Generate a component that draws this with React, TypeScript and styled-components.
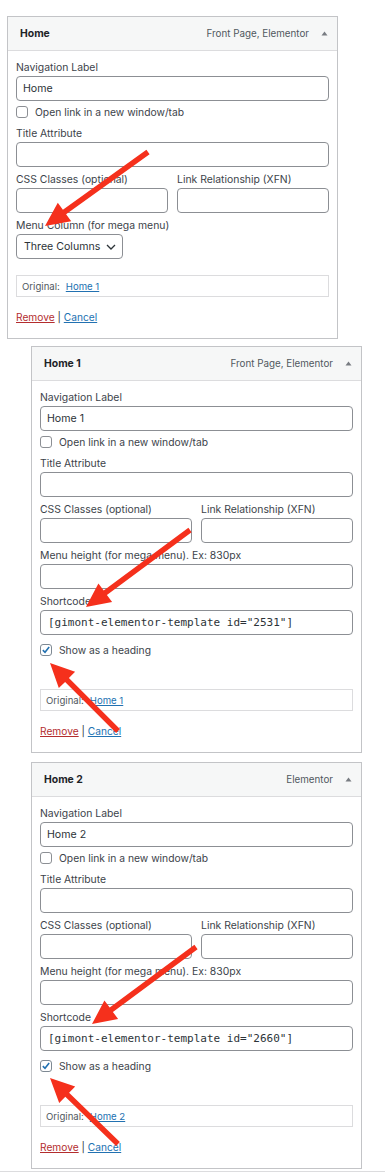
import styled, { createGlobalStyle } from "styled-components";

const GlobalStyle = createGlobalStyle`
  html, body {
    margin: 0;
    padding: 0;
    background: #fff;
  }
  body {
    font-family: Inter, "Liberation Sans", Arial, sans-serif;
    color: #3c434a;
  }
  * {
    box-sizing: border-box;
  }
`;

const Page = styled.div`
  position: relative;
  width: 385px;
  height: 1173px;
  padding-top: 16px;
  overflow: hidden;
`;

const Panel = styled.section<{ $indent: number; $gap: number }>`
  width: 331px;
  margin: ${(p) => p.$gap}px 0 0 ${(p) => p.$indent}px;
  border: 1px solid #c3c4c7;
  background: #fff;
`;

const Header = styled.div`
  display: flex;
  align-items: center;
  height: 34px;
  padding: 0 3px 0 12px;
  background: #f6f7f7;
  border-bottom: 1px solid #dcdcde;
`;

const Title = styled.div`
  flex: 1;
  font-size: 10.4px;
  font-weight: 700;
  color: #1d2327;
`;

const Meta = styled.span`
  margin-right: 5px;
  font-size: 9.8px;
  color: #50575e;
`;

const Toggle = styled.span`
  display: flex;
  align-items: center;
  justify-content: center;
  width: 20px;
  height: 20px;
`;

const Body = styled.div`
  padding: 8px 8px 13px;
`;

const Field = styled.div<{ $top?: number }>`
  margin-top: ${(p) => p.$top ?? 0}px;
`;

const Label = styled.label`
  display: block;
  font-size: 10.4px;
  line-height: 17px;
  color: #3c434a;
  white-space: nowrap;
`;

const TextInput = styled.input<{ $mono?: boolean }>`
  display: block;
  width: 100%;
  height: 25px;
  margin: 0;
  padding: 0 ${(p) => (p.$mono ? 7 : 6)}px;
  border: 1px solid #8c8f94;
  border-radius: 4px;
  background: #fff;
  color: #2c3338;
  font-family: ${(p) =>
    p.$mono ? '"DejaVu Sans Mono", "Liberation Mono", monospace' : 'Inter, "Liberation Sans", sans-serif'};
  font-size: ${(p) => (p.$mono ? 11 : 10.6)}px;
  outline: none;
`;

const Pair = styled.div`
  display: grid;
  grid-template-columns: 1fr 1fr;
  column-gap: 9px;
  margin-top: 4px;
`;

const SelectBox = styled.div`
  display: flex;
  align-items: center;
  justify-content: space-between;
  width: 107px;
  height: 25px;
  padding: 0 6px 0 7px;
  border: 1px solid #8c8f94;
  border-radius: 4px;
  font-size: 10.6px;
  color: #2c3338;
`;

const CheckRow = styled.div<{ $top: number }>`
  display: flex;
  align-items: center;
  gap: 7px;
  margin-top: ${(p) => p.$top}px;
  height: 16px;
  font-size: 10.3px;
  color: #3c434a;
`;

const Box = styled.span<{ $on?: boolean }>`
  position: relative;
  display: inline-flex;
  align-items: center;
  justify-content: center;
  width: 12px;
  height: 12px;
  border: 1px solid ${(p) => (p.$on ? "#7e8993" : "#8c8f94")};
  border-radius: 3px;
  background: #fff;
  flex: none;
`;

const Original = styled.div<{ $top: number }>`
  display: flex;
  align-items: center;
  height: 22px;
  margin-top: ${(p) => p.$top}px;
  padding: 0 5px;
  border: 1px solid #dcdcde;
  font-size: 9.6px;
  color: #50575e;
`;

const Link = styled.a<{ $danger?: boolean }>`
  color: ${(p) => (p.$danger ? "#b32d2e" : "#2271b1")};
  text-decoration: underline;
  cursor: pointer;
`;

const OriginalLink = styled(Link)`
  margin-left: 6px;
`;

const Actions = styled.div`
  margin-top: 12px;
  line-height: 16px;
  font-size: 10.2px;
  color: #2c3338;
`;

const Foot = styled.div`
  margin-top: 2px;
  border-top: 1px solid #dcdcde;
`;

const Overlay = styled.svg`
  position: absolute;
  top: 0;
  left: 0;
  pointer-events: none;
`;

const Caret = () => (
  <svg width="7" height="5" viewBox="0 0 7 5">
    <path d="M3.5 0.5 L6.5 4.5 L0.5 4.5 Z" fill="#787c82" />
  </svg>
);

const Chevron = () => (
  <svg width="10" height="6" viewBox="0 0 10 6">
    <path d="M1 1 L5 5 L9 1" fill="none" stroke="#2c3338" strokeWidth="1.3" />
  </svg>
);

const Tick = () => (
  <svg width="12" height="12" viewBox="0 0 12 12">
    <path d="M2.2 6.2 L4.8 8.8 L9.8 2.4" fill="none" stroke="#2271b1" strokeWidth="1.9" />
  </svg>
);

const Check = ({ on, label, top }: { on?: boolean; label: string; top: number }) => (
  <CheckRow $top={top}>
    <Box $on={on}>{on && <Tick />}</Box>
    <span>{label}</span>
  </CheckRow>
);

const TextField = ({ label, value, top, mono }: { label: string; value?: string; top?: number; mono?: boolean }) => (
  <Field $top={top}>
    <Label>{label}</Label>
    <TextInput readOnly value={value ?? ""} $mono={mono} />
  </Field>
);

type Item = {
  title: string;
  meta: string;
  indent: number;
  gap: number;
  megaHeight: boolean;
  shortcode?: string;
  original: string;
};

const items: Item[] = [
  { title: "Home", meta: "Front Page, Elementor", indent: 7, gap: 0, megaHeight: false, original: "Home 1" },
  {
    title: "Home 1",
    meta: "Front Page, Elementor",
    indent: 31,
    gap: 7,
    megaHeight: true,
    shortcode: '[gimont-elementor-template id="2531"]',
    original: "Home 1",
  },
  {
    title: "Home 2",
    meta: "Elementor",
    indent: 31,
    gap: 9,
    megaHeight: true,
    shortcode: '[gimont-elementor-template id="2660"]',
    original: "Home 2",
  },
];

const MenuItem = ({ item }: { item: Item }) => (
  <Panel $indent={item.indent} $gap={item.gap}>
    <Header>
      <Title>{item.title}</Title>
      <Meta>{item.meta}</Meta>
      <Toggle>
        <Caret />
      </Toggle>
    </Header>
    <Body>
      <TextField label="Navigation Label" value={item.title} />
      <Check label="Open link in a new window/tab" top={3} />
      <TextField label="Title Attribute" top={5} />
      <Pair>
        <TextField label="CSS Classes (optional)" />
        <TextField label="Link Relationship (XFN)" />
      </Pair>
      {item.megaHeight ? (
        <>
          <TextField label="Menu height (for mega menu). Ex: 830px" top={4} />
          <TextField label="Shortcode" value={item.shortcode} top={4} mono />
          <Check on label="Show as a heading" top={7} />
        </>
      ) : (
        <Field $top={4}>
          <Label>Menu Column (for mega menu)</Label>
          <SelectBox>
            <span>Three Columns</span>
            <Chevron />
          </SelectBox>
        </Field>
      )}
      <Original $top={item.megaHeight ? 31 : 16}>
        Original:
        <OriginalLink>{item.original}</OriginalLink>
      </Original>
      <Actions>
        <Link $danger>Remove</Link> | <Link>Cancel</Link>
      </Actions>
    </Body>
  </Panel>
);

// annotation arrows drawn over the screenshot: [tailX, tailY, tipX, tipY]
const arrows: [number, number, number, number][] = [
  [148, 152, 45, 226],
  [190, 530, 86, 607],
  [118, 731, 50, 663],
  [196, 947, 92, 1024],
  [118, 1144, 50, 1078],
];

const arrowPoints = ([tx, ty, hx, hy]: [number, number, number, number]) => {
  const len = Math.hypot(hx - tx, hy - ty);
  const ux = (hx - tx) / len;
  const uy = (hy - ty) / len;
  const nx = -uy;
  const ny = ux;
  const head = 24;
  const half = 11.5;
  const shaft = 2.7;
  const bx = hx - ux * head;
  const by = hy - uy * head;
  return [
    [tx + nx * shaft, ty + ny * shaft],
    [bx + nx * shaft, by + ny * shaft],
    [bx + nx * half, by + ny * half],
    [hx, hy],
    [bx - nx * half, by - ny * half],
    [bx - nx * shaft, by - ny * shaft],
    [tx - nx * shaft, ty - ny * shaft],
  ]
    .map((p) => p.map((v) => v.toFixed(1)).join(","))
    .join(" ");
};

export default function App() {
  return (
    <Page>
      <GlobalStyle />
      {items.map((item) => (
        <MenuItem key={item.title} item={item} />
      ))}
      <Foot />
      <Overlay width="385" height="1173" viewBox="0 0 385 1173">
        {arrows.map((a, i) => (
          <polygon key={i} points={arrowPoints(a)} fill="#f5301c" strokeLinejoin="round" />
        ))}
      </Overlay>
    </Page>
  );
}
